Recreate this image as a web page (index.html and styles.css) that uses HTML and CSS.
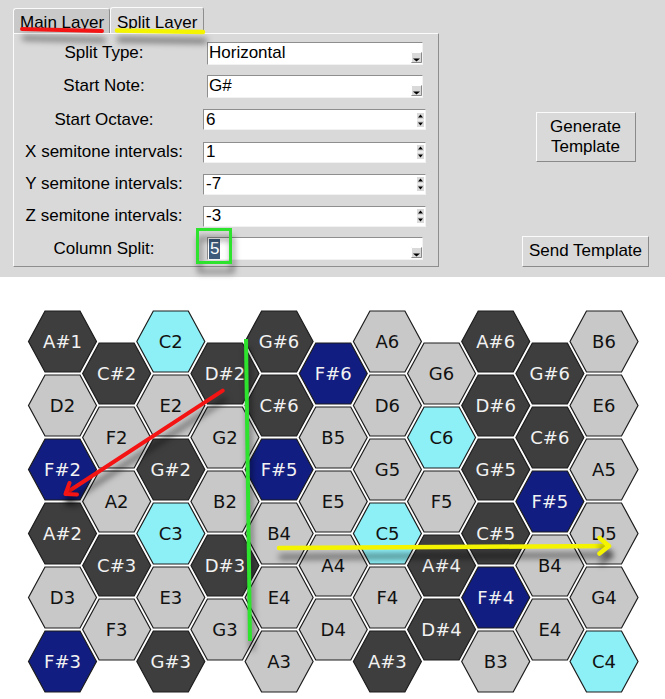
FILE: index.html
```html
<!DOCTYPE html>
<html>
<head>
<meta charset="utf-8">
<title>Split Layer</title>
<link rel="stylesheet" href="styles.css">
</head>
<body>
<div class="band">
  <div class="notebook">
    <div class="tabs">
      <div class="tab tab-main">Main Layer</div>
      <div class="tab tab-split">Split Layer</div>
    </div>
    <div class="pane">
      <div class="lbl">Split Type:</div>
      <div class="field combo"><span class="val">Horizontal</span><svg class="drop" width="11" height="11" viewBox="0 0 11 11"><rect width="11" height="11" fill="#d9d9d9"/><path d="M0.5 10.5V0.5H10.5" fill="none" stroke="#fff"/><path d="M10.5 0.5V10.5H0.5" fill="none" stroke="#8a8a8a"/><path d="M2 6.5H9L5.5 9.5Z" fill="#000"/></svg></div>

      <div class="lbl">Start Note:</div>
      <div class="field combo"><span class="val">G#</span><svg class="drop" width="11" height="11" viewBox="0 0 11 11"><rect width="11" height="11" fill="#d9d9d9"/><path d="M0.5 10.5V0.5H10.5" fill="none" stroke="#fff"/><path d="M10.5 0.5V10.5H0.5" fill="none" stroke="#8a8a8a"/><path d="M2 6.5H9L5.5 9.5Z" fill="#000"/></svg></div>

      <div class="lbl">Start Octave:</div>
      <div class="field spin"><span class="val">6</span><svg class="spinarr" width="7" height="14" viewBox="0 0 7 14"><rect width="7" height="6.5" fill="#d9d9d9"/><rect y="7.5" width="7" height="6.5" fill="#d9d9d9"/><path d="M1 4.5H6L3.5 1.5Z" fill="#000"/><path d="M1 9.5H6L3.5 12.5Z" fill="#000"/></svg></div>

      <div class="lbl">X semitone intervals:</div>
      <div class="field spin"><span class="val">1</span><svg class="spinarr" width="7" height="14" viewBox="0 0 7 14"><rect width="7" height="6.5" fill="#d9d9d9"/><rect y="7.5" width="7" height="6.5" fill="#d9d9d9"/><path d="M1 4.5H6L3.5 1.5Z" fill="#000"/><path d="M1 9.5H6L3.5 12.5Z" fill="#000"/></svg></div>

      <div class="lbl">Y semitone intervals:</div>
      <div class="field spin"><span class="val">-7</span><svg class="spinarr" width="7" height="14" viewBox="0 0 7 14"><rect width="7" height="6.5" fill="#d9d9d9"/><rect y="7.5" width="7" height="6.5" fill="#d9d9d9"/><path d="M1 4.5H6L3.5 1.5Z" fill="#000"/><path d="M1 9.5H6L3.5 12.5Z" fill="#000"/></svg></div>

      <div class="lbl">Z semitone intervals:</div>
      <div class="field spin"><span class="val">-3</span><svg class="spinarr" width="7" height="14" viewBox="0 0 7 14"><rect width="7" height="6.5" fill="#d9d9d9"/><rect y="7.5" width="7" height="6.5" fill="#d9d9d9"/><path d="M1 4.5H6L3.5 1.5Z" fill="#000"/><path d="M1 9.5H6L3.5 12.5Z" fill="#000"/></svg></div>

      <div class="lbl">Column Split:</div>
      <div class="field combo"><span class="val sel">5</span><svg class="drop" width="11" height="11" viewBox="0 0 11 11"><rect width="11" height="11" fill="#d9d9d9"/><path d="M0.5 10.5V0.5H10.5" fill="none" stroke="#fff"/><path d="M10.5 0.5V10.5H0.5" fill="none" stroke="#8a8a8a"/><path d="M2 6.5H9L5.5 9.5Z" fill="#000"/></svg></div>
    </div>
  </div>
  <div class="actions">
    <button class="btn btn-gen">Generate<br>Template</button>
    <button class="btn btn-send">Send Template</button>
  </div>
</div>

<svg class="grid" width="665" height="422" viewBox="0 0 665 422">
  <defs>
    <polygon id="hx" points="-34,0 -17.5,-30.5 17.5,-30.5 34,0 17.5,30.5 -17.5,30.5"/>
  </defs>
  <g class="hexes">
    <!-- col 0 -->
    <use href="#hx" x="62.5" y="64.5" class="dk"/><text x="62.5" y="71" class="tw">A#1</text>
    <use href="#hx" x="62.5" y="128.5" class="lt"/><text x="62.5" y="135" class="tb">D2</text>
    <use href="#hx" x="62.5" y="192.5" class="nv"/><text x="62.5" y="199" class="tw">F#2</text>
    <use href="#hx" x="62.5" y="256.5" class="dk"/><text x="62.5" y="263" class="tw">A#2</text>
    <use href="#hx" x="62.5" y="320.5" class="lt"/><text x="62.5" y="327" class="tb">D3</text>
    <use href="#hx" x="62.5" y="384.5" class="nv"/><text x="62.5" y="391" class="tw">F#3</text>
    <!-- col 1 -->
    <use href="#hx" x="116.65" y="96.5" class="dk"/><text x="116.65" y="103" class="tw">C#2</text>
    <use href="#hx" x="116.65" y="160.5" class="lt"/><text x="116.65" y="167" class="tb">F2</text>
    <use href="#hx" x="116.65" y="224.5" class="lt"/><text x="116.65" y="231" class="tb">A2</text>
    <use href="#hx" x="116.65" y="288.5" class="dk"/><text x="116.65" y="295" class="tw">C#3</text>
    <use href="#hx" x="116.65" y="352.5" class="lt"/><text x="116.65" y="359" class="tb">F3</text>
    <!-- col 2 -->
    <use href="#hx" x="170.8" y="64.5" class="cy"/><text x="170.8" y="71" class="tb">C2</text>
    <use href="#hx" x="170.8" y="128.5" class="lt"/><text x="170.8" y="135" class="tb">E2</text>
    <use href="#hx" x="170.8" y="192.5" class="dk"/><text x="170.8" y="199" class="tw">G#2</text>
    <use href="#hx" x="170.8" y="256.5" class="cy"/><text x="170.8" y="263" class="tb">C3</text>
    <use href="#hx" x="170.8" y="320.5" class="lt"/><text x="170.8" y="327" class="tb">E3</text>
    <use href="#hx" x="170.8" y="384.5" class="dk"/><text x="170.8" y="391" class="tw">G#3</text>
    <!-- col 3 -->
    <use href="#hx" x="224.95" y="96.5" class="dk"/><text x="224.95" y="103" class="tw">D#2</text>
    <use href="#hx" x="224.95" y="160.5" class="lt"/><text x="224.95" y="167" class="tb">G2</text>
    <use href="#hx" x="224.95" y="224.5" class="lt"/><text x="224.95" y="231" class="tb">B2</text>
    <use href="#hx" x="224.95" y="288.5" class="dk"/><text x="224.95" y="295" class="tw">D#3</text>
    <use href="#hx" x="224.95" y="352.5" class="lt"/><text x="224.95" y="359" class="tb">G3</text>
    <!-- col 4 -->
    <use href="#hx" x="279.1" y="64.5" class="dk"/><text x="279.1" y="71" class="tw">G#6</text>
    <use href="#hx" x="279.1" y="128.5" class="dk"/><text x="279.1" y="135" class="tw">C#6</text>
    <use href="#hx" x="279.1" y="192.5" class="nv"/><text x="279.1" y="199" class="tw">F#5</text>
    <use href="#hx" x="279.1" y="256.5" class="lt"/><text x="279.1" y="263" class="tb">B4</text>
    <use href="#hx" x="279.1" y="320.5" class="lt"/><text x="279.1" y="327" class="tb">E4</text>
    <use href="#hx" x="279.1" y="384.5" class="lt"/><text x="279.1" y="391" class="tb">A3</text>
    <!-- col 5 -->
    <use href="#hx" x="333.25" y="96.5" class="nv"/><text x="333.25" y="103" class="tw">F#6</text>
    <use href="#hx" x="333.25" y="160.5" class="lt"/><text x="333.25" y="167" class="tb">B5</text>
    <use href="#hx" x="333.25" y="224.5" class="lt"/><text x="333.25" y="231" class="tb">E5</text>
    <use href="#hx" x="333.25" y="288.5" class="lt"/><text x="333.25" y="295" class="tb">A4</text>
    <use href="#hx" x="333.25" y="352.5" class="lt"/><text x="333.25" y="359" class="tb">D4</text>
    <!-- col 6 -->
    <use href="#hx" x="387.4" y="64.5" class="lt"/><text x="387.4" y="71" class="tb">A6</text>
    <use href="#hx" x="387.4" y="128.5" class="lt"/><text x="387.4" y="135" class="tb">D6</text>
    <use href="#hx" x="387.4" y="192.5" class="lt"/><text x="387.4" y="199" class="tb">G5</text>
    <use href="#hx" x="387.4" y="256.5" class="cy"/><text x="387.4" y="263" class="tb">C5</text>
    <use href="#hx" x="387.4" y="320.5" class="lt"/><text x="387.4" y="327" class="tb">F4</text>
    <use href="#hx" x="387.4" y="384.5" class="dk"/><text x="387.4" y="391" class="tw">A#3</text>
    <!-- col 7 -->
    <use href="#hx" x="441.55" y="96.5" class="lt"/><text x="441.55" y="103" class="tb">G6</text>
    <use href="#hx" x="441.55" y="160.5" class="cy"/><text x="441.55" y="167" class="tb">C6</text>
    <use href="#hx" x="441.55" y="224.5" class="lt"/><text x="441.55" y="231" class="tb">F5</text>
    <use href="#hx" x="441.55" y="288.5" class="dk"/><text x="441.55" y="295" class="tw">A#4</text>
    <use href="#hx" x="441.55" y="352.5" class="dk"/><text x="441.55" y="359" class="tw">D#4</text>
    <!-- col 8 -->
    <use href="#hx" x="495.7" y="64.5" class="dk"/><text x="495.7" y="71" class="tw">A#6</text>
    <use href="#hx" x="495.7" y="128.5" class="dk"/><text x="495.7" y="135" class="tw">D#6</text>
    <use href="#hx" x="495.7" y="192.5" class="dk"/><text x="495.7" y="199" class="tw">G#5</text>
    <use href="#hx" x="495.7" y="256.5" class="dk"/><text x="495.7" y="263" class="tw">C#5</text>
    <use href="#hx" x="495.7" y="320.5" class="nv"/><text x="495.7" y="327" class="tw">F#4</text>
    <use href="#hx" x="495.7" y="384.5" class="lt"/><text x="495.7" y="391" class="tb">B3</text>
    <!-- col 9 -->
    <use href="#hx" x="549.85" y="96.5" class="dk"/><text x="549.85" y="103" class="tw">G#6</text>
    <use href="#hx" x="549.85" y="160.5" class="dk"/><text x="549.85" y="167" class="tw">C#6</text>
    <use href="#hx" x="549.85" y="224.5" class="nv"/><text x="549.85" y="231" class="tw">F#5</text>
    <use href="#hx" x="549.85" y="288.5" class="lt"/><text x="549.85" y="295" class="tb">B4</text>
    <use href="#hx" x="549.85" y="352.5" class="lt"/><text x="549.85" y="359" class="tb">E4</text>
    <!-- col 10 -->
    <use href="#hx" x="604" y="64.5" class="lt"/><text x="604" y="71" class="tb">B6</text>
    <use href="#hx" x="604" y="128.5" class="lt"/><text x="604" y="135" class="tb">E6</text>
    <use href="#hx" x="604" y="192.5" class="lt"/><text x="604" y="199" class="tb">A5</text>
    <use href="#hx" x="604" y="256.5" class="lt"/><text x="604" y="263" class="tb">D5</text>
    <use href="#hx" x="604" y="320.5" class="lt"/><text x="604" y="327" class="tb">G4</text>
    <use href="#hx" x="604" y="384.5" class="cy"/><text x="604" y="391" class="tb">C4</text>
  </g>
</svg>

<svg class="ann" width="665" height="699" viewBox="0 0 665 699">
  <g class="shadow">
    <line x1="22" y1="29" x2="102" y2="31" class="mk-red"/>
    <line x1="117" y1="30.5" x2="203" y2="32" class="mk-yellow"/>
    <rect x="197.5" y="229.5" width="33" height="33" class="mk-box"/>
    <line x1="246" y1="339" x2="250" y2="641" class="mk-green"/>
    <line x1="222.7" y1="390.7" x2="66" y2="493" class="mk-red"/>
    <polyline points="69.5,483 65.5,494 77,494.5" class="mk-red"/>
    <line x1="279" y1="548" x2="608" y2="546" class="mk-yellow"/>
    <polyline points="599.5,538 609,546 599.5,553.5" class="mk-yellow"/>
  </g>
</svg>
</body>
</html>
```

FILE: styles.css
```css
* {
  box-sizing: border-box;
}

body {
  margin: 0;
  width: 665px;
  height: 699px;
  overflow: hidden;
  position: relative;
  background: #ffffff;
  color: #000000;
  font-family: "Liberation Sans", Arial, sans-serif;
  font-size: 17px;
}

/* ---------- top control band ---------- */
.band {
  height: 277px;
  background: #d9d9d9;
  display: flex;
}

.notebook {
  margin-left: 13px;
  padding-top: 7px;
  width: 426px;
}

.tabs {
  display: flex;
  align-items: flex-end;
  height: 26px;
}

.tab {
  line-height: 19px;
  white-space: nowrap;
  border-top: 1px solid #fbfbfb;
  border-left: 1px solid #fbfbfb;
  border-right: 1px solid #8e8e8e;
  border-radius: 3px 3px 0 0;
}

.tab-main {
  width: 97px;
  height: 25px;
  padding: 4px 0 0 6px;
  background: #c9c9c9;
}

.tab-split {
  width: 94px;
  height: 26px;
  padding: 5px 0 0 6px;
  background: #d9d9d9;
}

.pane {
  width: 426px;
  height: 234px;
  border: 1px solid;
  border-color: #fbfbfb #8e8e8e #8e8e8e #fbfbfb;
  padding-top: 3px;
  display: grid;
  grid-template-columns: 180px 1fr;
  grid-template-rows: 32px 34px 33px 32px 32px 32px 33px;
  align-items: center;
}

.lbl {
  text-align: center;
  line-height: 20px;
  white-space: nowrap;
}

.field {
  display: flex;
  align-items: center;
  background: #ffffff;
  border: 1px solid;
  border-color: #8e8e8e #f2f2f2 #f2f2f2 #8e8e8e;
  line-height: 20px;
}

.combo {
  height: 23px;
  margin-left: 13px;
  margin-right: 15px;
  padding-left: 1px;
}

.spin {
  height: 21px;
  margin-left: 9px;
  margin-right: 12px;
  padding-left: 2px;
}

.val {
  white-space: nowrap;
}

.sel {
  background: #3d5a7b;
  color: #ffffff;
  padding: 0 1px;
}

.drop {
  display: block;
  margin-left: auto;
  align-self: flex-end;
  margin-bottom: 1px;
}

.spinarr {
  display: block;
  margin-left: auto;
  margin-right: 1px;
}

.actions {
  margin-left: 83px;
  width: 127px;
  padding-top: 112px;
  display: flex;
  flex-direction: column;
  align-items: center;
}

.btn {
  margin: 0;
  font-family: inherit;
  font-size: 17px;
  line-height: 20px;
  color: #000000;
  background: #d9d9d9;
  border: 1px solid;
  border-color: #fbfbfb #8a8a8a #8a8a8a #fbfbfb;
  border-radius: 0;
  text-align: center;
  white-space: nowrap;
}

.btn-gen {
  width: 100px;
  padding: 4px 0 4px;
}

.btn-send {
  width: 127px;
  margin-top: 74px;
  padding: 4px 0 5px;
}

/* ---------- hex grid ---------- */
.grid {
  display: block;
}

.hexes use {
  stroke: #1c1c1c;
  stroke-width: 1.2;
}

.dk { fill: #3e3e3e; }
.lt { fill: #c8c8c8; }
.cy { fill: #8df0f6; }
.nv { fill: #111d80; }

.hexes text {
  font-family: "DejaVu Sans", sans-serif;
  font-size: 18px;
  text-anchor: middle;
}

.tw { fill: #f2f2f2; }
.tb { fill: #111111; }

/* ---------- annotation overlay ---------- */
.ann {
  position: absolute;
  left: 0;
  top: 0;
  pointer-events: none;
}

.shadow > * {
  filter: drop-shadow(2px 9px 3px rgba(0, 0, 0, 0.55));
}

.mk-red {
  fill: none;
  stroke: #f51414;
  stroke-width: 4;
  stroke-linecap: round;
  stroke-linejoin: round;
}

.mk-yellow {
  fill: none;
  stroke: #f4f400;
  stroke-width: 4.5;
  stroke-linecap: round;
  stroke-linejoin: round;
}

.mk-green {
  fill: none;
  stroke: #2ee32e;
  stroke-width: 4;
  stroke-linecap: butt;
}

.mk-box {
  fill: none;
  stroke: #2ee32e;
  stroke-width: 3;
}
```
